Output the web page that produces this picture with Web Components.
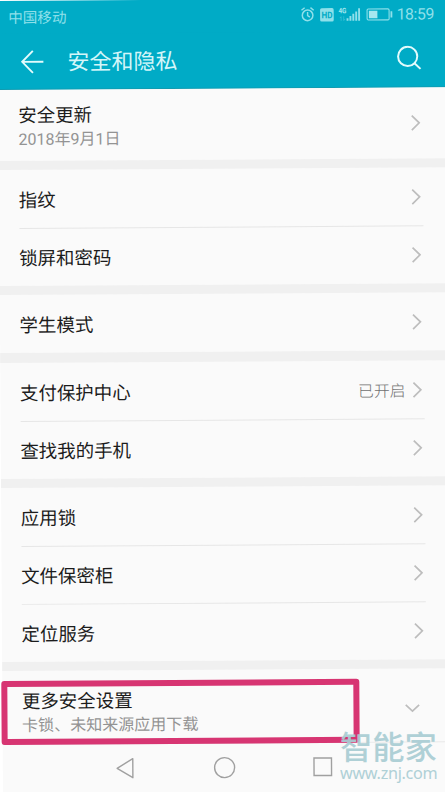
<!DOCTYPE html>
<html lang="zh-CN">
<head>
<meta charset="utf-8">
<title>安全和隐私</title>
<style>
html,body{margin:0;background:#fff}
body{width:445px;height:792px;overflow:hidden;font-family:Roboto,"Noto Sans CJK SC",sans-serif;color:#1c1c1c}
</style>
</head>
<body>
<phone-screen>
  <status-bar carrier="中国移动" time="18:59"></status-bar>
  <title-bar>安全和隐私</title-bar>
  <settings-group style="--h:70.5px"><settings-row sub="2018年9月1日">安全更新</settings-row></settings-group>
  <settings-group style="--h:57.8px"><settings-row>指纹</settings-row><settings-row>锁屏和密码</settings-row></settings-group>
  <settings-group style="--h:58px"><settings-row>学生模式</settings-row></settings-group>
  <settings-group style="--h:58px"><settings-row value="已开启">支付保护中心</settings-row><settings-row>查找我的手机</settings-row></settings-group>
  <settings-group style="--h:57.9px"><settings-row>应用锁</settings-row><settings-row>文件保密柜</settings-row><settings-row>定位服务</settings-row></settings-group>
  <settings-group style="--h:72.3px"><settings-row sub="卡锁、未知来源应用下载" expand>更多安全设置</settings-row></settings-group>
  <nav-bar></nav-bar>
  <highlight-frame slot="overlay"></highlight-frame>
</phone-screen>
<site-mark></site-mark>
<script>
function define(name, render) {
  customElements.define(name, class extends HTMLElement {
    connectedCallback() {
      if (!this.shadowRoot) this.attachShadow({mode: 'open'}).innerHTML = render(this);
    }
  });
}

define('phone-screen', () => `<style>
:host{display:block;position:relative;width:447px;height:797px;transform:rotate(-.36deg);transform-origin:0 0}
.strip{position:absolute;left:0;top:0;width:141px;height:1.4px;background:#fff}
.page{display:flex;flex-direction:column;margin-left:-2.5px}
</style><div class="page"><slot></slot></div><div class="strip"></div><slot name="overlay"></slot>`);

define('status-bar', el => `<style>
:host{display:flex;align-items:center;justify-content:space-between;height:34px;padding:0 14.5px 0 10.5px;box-sizing:border-box;background:#00abc6;color:#8fe0ea;box-shadow:0 1px #00abc6}
.c{font-size:14.6px;line-height:20px;padding-top:1px}
.r{display:flex;align-items:center}
.t{font-size:15.8px;line-height:20px;margin-left:4px;width:36px;letter-spacing:-.4px}
svg{display:block}
text{font-family:Roboto,sans-serif;font-weight:700}
</style><span class="c">${el.getAttribute('carrier')}</span>
<div class="r"><svg width="93" height="20" viewBox="300 7 93 20" fill="none" stroke="#8fe0ea">
<circle cx="307.5" cy="17.3" r="5.3" stroke-width="1.5"/><path d="M307.5 14v3.6l2.3 1.5M301.4 12.2l3.2-2.6M313.6 12.2l-3.2-2.6" stroke-width="1.4"/>
<rect x="320" y="10.2" width="13.6" height="13.4" rx="1.6" fill="#8fe0ea" stroke="none"/>
<text x="321.3" y="20.3" font-size="9.2" textLength="11" lengthAdjust="spacingAndGlyphs" fill="#00abc6" stroke="none">HD</text>
<text x="338.3" y="15.5" font-size="7.5" textLength="8" lengthAdjust="spacingAndGlyphs" fill="#a5e7ef" stroke="none">4G</text>
<path d="M341 23v-4m-1.2 1.2 1.2-1.5M343.6 18.5v4m1.2-1.2-1.2 1.5" stroke-width=".8" opacity=".4"/>
<path d="M347.4 23v-2.6M350.3 23v-4.7M353.2 23v-7M356.1 23v-9.3M359 23V10.6" stroke-width="1.9"/>
<rect x="367" y="11.3" width="22" height="11" rx="1.2" stroke-width="1.1"/><rect x="368.8" y="13" width="8.5" height="7.6" fill="#a5e7ef" stroke="none"/><path d="M391.3 13.7v6.2" stroke-width="1.8"/>
</svg><span class="t">${el.getAttribute('time')}</span></div>`);

define('title-bar', () => `<style>
:host{display:flex;align-items:center;height:56px;box-sizing:border-box;padding:0 25.5px 0 22.5px;background:#00abc6;border-bottom:1px solid #109bb0;color:#d3f6f9;font-size:22px}
.t{flex:1;margin-left:23px;line-height:30px;padding-top:2px}
svg{display:block}
svg:last-child{margin-top:-1px}
</style><svg width="24" height="26" viewBox="0 0 24 26" fill="none" stroke="#e2fbfc" stroke-width="1.9"><path d="M12.5 2 1.8 13l10.7 11M1.8 13H23"/></svg>
<span class="t"><slot></slot></span>
<svg width="26" height="26" viewBox="0 0 26 26" fill="none" stroke="#e2fbfc" stroke-width="2"><circle cx="11.3" cy="11" r="9.6"/><path d="m17.8 17.5 6.3 6"/></svg>`);

define('settings-group', () => `<style>
:host{display:flex;flex-direction:column;background:#fafafa}
:host(:not(:first-of-type))::before{content:"";height:9.5px;background:#f0f0f0}
::slotted(settings-row){height:var(--h)}
::slotted(settings-row:not(:first-child)){--line:#e6e6e6}
</style><slot></slot>`);

define('settings-row', el => {
  const sub = el.getAttribute('sub'), value = el.getAttribute('value'), expand = el.hasAttribute('expand');
  const icon = expand
    ? '<svg width="16" height="10" viewBox="0 0 16 10"><path d="m1.3 1.5 6.7 6.2 6.7-6.2"/></svg>'
    : '<svg width="10" height="17" viewBox="0 0 10 17"><path d="m1 1.2 7.4 7.3L1 15.8"/></svg>';
  return `<style>
:host{display:flex;box-sizing:border-box;padding:0 25.5px 0 20px}
.box{flex:1;display:flex;align-items:center;border-top:1px solid var(--line,transparent);padding-right:${expand ? 6 : 1.5}px}
.txt{flex:1;display:flex;flex-direction:column;padding-top:${expand ? 11 : 3}px}
.t{font-size:18.45px;line-height:24px;white-space:nowrap}
.s{font-size:16.05px;line-height:23px;color:#939393;white-space:nowrap}
.v{font-size:15.8px;color:#707070;margin:0 7px 0 0;font-weight:300}
svg{display:block;fill:none;stroke:#bdbdbd;stroke-width:1.7;margin-top:${expand ? 6 : 0}px}
</style><div class="box"><div class="txt"><span class="t"><slot></slot></span>${sub ? `<span class="s">${sub}</span>` : ''}</div>${value ? `<span class="v">${value}</span>` : ''}${icon}</div>`;
});

define('nav-bar', () => `<style>
:host{display:flex;height:54px;box-sizing:border-box;border-top:1px solid #e9e9e9;padding:11px 0 0 113.6px;gap:77px;background:#fafafa}
svg{display:block;fill:none;stroke:#a0a0a0;stroke-width:1.4;overflow:visible}
</style>
<svg width="22" height="26" viewBox="0 0 22 26"><path d="M17 3.5v19L1.3 13z" stroke-linejoin="round"/></svg>
<svg width="22" height="26" viewBox="0 0 22 26"><circle cx="9.8" cy="13" r="10"/></svg>
<svg width="22" height="26" viewBox="0 0 22 26"><rect x=".2" y="4" width="17.5" height="17.5"/></svg>`);

define('highlight-frame', () => `<style>
:host{position:absolute;left:-2.6px;top:681px;width:358px;height:64px;box-sizing:border-box;border:6.5px solid #d73572;border-radius:3px}
</style>`);

define('site-mark', () => `<style>
:host{position:absolute;left:340px;top:729px;width:100px;color:#a9cdd4;opacity:.92}
.n{font:500 32.3px/32px "Noto Sans CJK SC",sans-serif}
.u{font:16.2px/18px "Noto Sans",sans-serif;letter-spacing:-.3px;margin-top:3px;white-space:nowrap}
</style><div class="n">智能家</div><div class="u">www.znj.com</div>`);
</script>
</body>
</html>
